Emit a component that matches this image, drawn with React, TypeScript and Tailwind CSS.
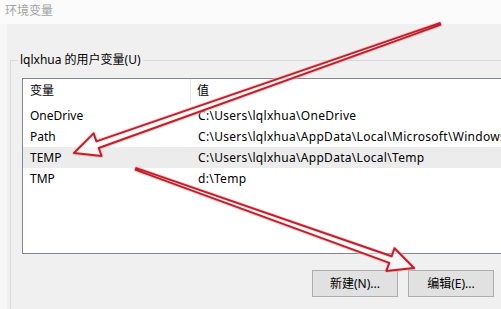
import React from 'react'

const font = { fontFamily: '"Noto Sans", "Noto Sans CJK SC", sans-serif' }

const rows = [
  { name: 'OneDrive', value: 'C:\\Users\\lqlxhua\\OneDrive' },
  { name: 'Path', value: 'C:\\Users\\lqlxhua\\AppData\\Local\\Microsoft\\WindowsApps;' },
  { name: 'TEMP', value: 'C:\\Users\\lqlxhua\\AppData\\Local\\Temp', selected: true },
  { name: 'TMP', value: 'd:\\Temp' },
]

// hollow callout arrow, tail tapers to a point
function arrowPoints(tail: [number, number], tip: [number, number]) {
  const dx = tail[0] - tip[0]
  const dy = tail[1] - tip[1]
  const len = Math.hypot(dx, dy)
  const ux = dx / len
  const uy = dy / len
  const nx = -uy
  const ny = ux
  const bx = tip[0] + 25 * ux
  const by = tip[1] + 25 * uy
  const pts = [
    [tail[0] - 1 * nx, tail[1] - 1 * ny],
    [bx - 3.5 * nx, by - 3.5 * ny],
    [bx - 12 * nx, by - 12 * ny],
    tip,
    [bx + 12 * nx, by + 12 * ny],
    [bx + 3.5 * nx, by + 3.5 * ny],
    [tail[0] + 1 * nx, tail[1] + 1 * ny],
  ]
  return pts.map(p => `${p[0].toFixed(1)},${p[1].toFixed(1)}`).join(' ')
}

function Arrows() {
  const a1 = arrowPoints([440, 24], [74, 153])
  const a2 = arrowPoints([136, 169], [414, 268])
  return (
    <svg className="absolute inset-0 pointer-events-none" width="501" height="309">
      {[a1, a2].map((p, i) => (
        <g key={i}>
          <polygon points={p} fill="none" stroke="#f3b5b8" strokeOpacity="0.6" strokeWidth="4" strokeLinejoin="round" />
          <polygon points={p} fill="#ffffff" fillOpacity="0.55" stroke="#c01f29" strokeWidth="2" strokeLinejoin="round" />
        </g>
      ))}
    </svg>
  )
}

export default function App() {
  return (
    <div className="relative w-[501px] h-[309px] overflow-hidden flex flex-col bg-[#f0f0f0] text-[12px] text-black" style={font}>
      {/* Title bar */}
      <div className="h-[24px] shrink-0 bg-[#fbfbfb] pl-[5px] pt-[2px] text-[12px] text-[#a3a3a3] leading-[18px]">环境变量</div>

      {/* Body */}
      <div className="flex-1 flex min-h-0">
        <div className="w-[7px] shrink-0 bg-[#f7f7f7]" />
        <div className="flex-1 min-w-0 pt-[29px] pl-[3px]">
          <fieldset className="h-full w-[700px] border-l border-t border-[#d9d9d9] min-w-0">
            <legend className="ml-[7px] px-[2px] leading-[14px] whitespace-nowrap">lqlxhua 的用户变量(U)</legend>

            {/* List view */}
            <div className="ml-[11px] mt-[11px] h-[176px] w-[650px] border border-[#828790] bg-white">
              <div className="flex h-[24px] items-center">
                <div className="w-[168px] h-full flex items-center pl-[7px] border-r border-[#e5e5e5]">变量</div>
                <div className="pl-[6px]">值</div>
              </div>
              <div className="pt-[2px]">
                {rows.map(r => (
                  <div key={r.name} className={`flex h-[21px] items-center whitespace-nowrap ${r.selected ? 'bg-[#ececec]' : ''}`}>
                    <div className="w-[168px] pl-[7px]">{r.name}</div>
                    <div className="pl-[7px] tracking-[0.3px]">{r.value}</div>
                  </div>
                ))}
              </div>
            </div>

            {/* Buttons */}
            <div className="flex gap-[10px] ml-[301px] mt-[16px]">
              <button className="w-[86px] h-[27px] bg-[#e1e1e1] border border-[#adadad] text-[12px]">新建(N)...</button>
              <button className="w-[86px] h-[27px] bg-[#e1e1e1] border border-[#adadad] text-[12px]">编辑(E)...</button>
            </div>
          </fieldset>
        </div>
      </div>

      <Arrows />
    </div>
  )
}
